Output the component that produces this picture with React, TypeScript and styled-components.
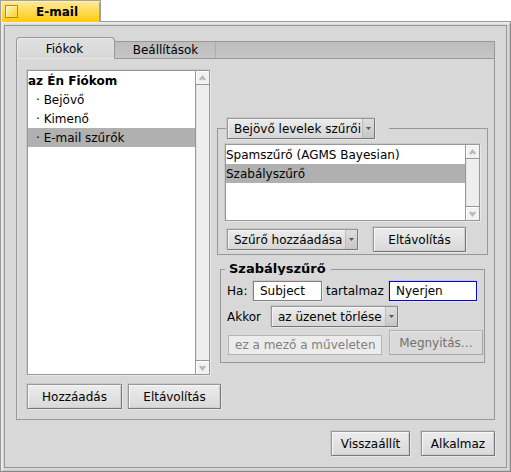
import React from "react";
import styled, { createGlobalStyle, css } from "styled-components";

const GlobalStyle = createGlobalStyle`
  *, *::before, *::after { box-sizing: border-box; }
  body {
    margin: 0;
    background: #fff;
    color: #000;
    font: 12px/20px "DejaVu Sans", sans-serif;
  }
  button, input, select { font: inherit; color: inherit; margin: 0; }
  ul { list-style: none; margin: 0; padding: 0; }
`;

const edge = "#989898";
const face = "#d8d8d8";

const Window = styled.div`
  display: flex;
  flex-direction: column;
  min-height: 100vh;
`;

const TitleTab = styled.header`
  display: flex;
  align-items: flex-start;
  gap: 18px;
  align-self: flex-start;
  width: 101px;
  height: 22px;
  margin-bottom: -1px;
  padding: 2px 0 0 4px;
  border: solid #a0a0a0;
  border-width: 1px 1px 0 1px;
  background: linear-gradient(#ffeb9a, #ffe068 35%, #ffcb0c);
  box-shadow: inset 1px 1px 0 #fff0b4, inset -1px 0 0 #dca800;
  font-weight: bold;
  z-index: 1;
`;

const CloseBox = styled.button`
  width: 13px;
  height: 13px;
  margin-top: 2px;
  padding: 0;
  border: 1px solid #b58b00;
  background: linear-gradient(135deg, #fff3bd, #ffd12a);
  box-shadow: inset 1px 1px 0 #fff8dc;
`;

const Title = styled.h1`
  margin: 0;
  font-size: 12px;
  line-height: 18px;
`;

const Frame = styled.div`
  display: flex;
  flex: 1;
  padding: 3px;
  border: 1px solid #888;
  border-top-color: ${edge};
  border-left-color: ${edge};
  background: ${face};
  box-shadow: inset 1px 1px 0 #eee, inset 2px 2px 0 #e4e4e4, inset -1px -1px 0 #c4c4c4;
`;

const Main = styled.main`
  display: flex;
  flex-direction: column;
  flex: 1;
  min-width: 0;
  padding: 11px;
  border: 1px solid ${edge};
  background: ${face};
`;

const TabBar = styled.div`
  display: flex;
  align-items: flex-end;
`;

const Tab = styled.button<{ $active?: boolean }>`
  height: 18px;
  width: 101px;
  padding: 0;
  border: solid ${edge};
  border-width: 1px 0;
  background: linear-gradient(#bdbdbd, #c6c6c6);
  box-shadow: inset -1px 0 0 #acacac;
  line-height: 16px;
  ${(p) =>
    p.$active &&
    css`
      width: 99px;
      height: 22px;
      padding: 1px 2px 0 0;
      border-width: 1px 1px 0 1px;
      border-radius: 4px 4px 0 0;
      background: linear-gradient(#e0e0e0, ${face});
      box-shadow: inset 1px 1px 0 #ebebeb, inset 0 -1px 0 #e6e6e6;
      line-height: 20px;
    `}
`;

const TabFill = styled.div`
  flex: 1;
  height: 18px;
  border: solid ${edge};
  border-width: 1px 1px 1px 0;
  background: linear-gradient(#bdbdbd, #c6c6c6);
`;

const Panel = styled.section`
  display: flex;
  flex-direction: column;
  flex: 1;
  gap: 9px;
  padding: 11px 6px 10px 10px;
  border: solid ${edge};
  border-width: 0 1px 1px 1px;
  box-shadow: inset 1px 0 0 #e2e2e2;
`;

const Columns = styled.div`
  display: flex;
  flex: 1;
  gap: 7px;
`;

const Settings = styled.div`
  display: flex;
  flex-direction: column;
  gap: 8px;
  flex: 1;
  min-width: 0;
  padding-top: 48px;
`;

const ListFrame = styled.div<{ $width?: number; $height?: number }>`
  display: flex;
  flex: none;
  width: ${(p) => (p.$width ? `${p.$width}px` : "auto")};
  height: ${(p) => (p.$height ? `${p.$height}px` : "auto")};
  border: 1px solid ${edge};
  background: #fff;
  box-shadow: -1px -1px 0 #c8c8c8, 1px 1px 0 #e8e8e8;
`;

const List = styled.ul`
  flex: 1;
  min-width: 0;
`;

const Item = styled.li<{ $selected?: boolean; $nested?: boolean; $heading?: boolean }>`
  height: 19px;
  padding-left: ${(p) => (p.$nested ? 8 : 0)}px;
  line-height: 20px;
  white-space: nowrap;
  font-weight: ${(p) => (p.$heading ? "bold" : "normal")};
  background: ${(p) => (p.$selected ? "#b0b0b0" : "transparent")};
`;

const ScrollTrack = styled.div`
  display: flex;
  flex-direction: column;
  justify-content: space-between;
  width: 14px;
  border-left: 1px solid ${edge};
  background: #eee;
  box-shadow: inset 1px 0 0 #e2e2e2;
`;

const ScrollButton = styled.button<{ $down?: boolean }>`
  display: grid;
  place-items: center;
  width: 13px;
  height: 14px;
  padding: 0;
  border: solid ${edge};
  border-width: ${(p) => (p.$down ? "1px 0 0" : "0 0 1px")};
  background: #f2f2f2;
  box-shadow: inset 1px 1px 0 #fff;
`;

function ScrollBar() {
  return (
    <ScrollTrack>
      <ScrollButton aria-label="Fel">
        <svg width="7" height="6" viewBox="0 0 7 6">
          <path d="M3.5 0 7 4.5 5 5.5 3.5 4 2 5.5 0 4.5Z" fill="#b8b8b8" />
        </svg>
      </ScrollButton>
      <ScrollButton $down aria-label="Le">
        <svg width="7" height="6" viewBox="0 0 7 6">
          <path d="M3.5 6 7 1.5 5 .5 3.5 2 2 .5 0 1.5Z" fill="#b8b8b8" />
        </svg>
      </ScrollButton>
    </ScrollTrack>
  );
}

const Button = styled.button<{ $width: number }>`
  flex: none;
  width: ${(p) => p.$width}px;
  height: 25px;
  padding: 1px 0 0;
  border: 1px solid;
  border-color: ${edge} #777 #777 ${edge};
  background: linear-gradient(#ececec, #d9d9d9);
  box-shadow: inset 1px 1px 0 #f8f8f8, inset -1px -1px 0 #cecece, -1px -1px 0 #c8c8c8, 1px 1px 0 #e6e6e6;
  line-height: 22px;
  white-space: nowrap;
  &:disabled {
    border-color: #b4b4b4 #a4a4a4 #a4a4a4 #b4b4b4;
    background: #dadada;
    box-shadow: inset 1px 1px 0 #e4e4e4;
    color: #727272;
  }
`;

const MenuBox = styled.span<{ $width: number }>`
  display: inline-grid;
  grid-template-columns: 1fr 12px;
  flex: none;
  width: ${(p) => p.$width}px;
  height: 21px;
  border: 1px solid;
  border-color: ${edge} #777 #777 ${edge};
  background: linear-gradient(#ececec, #d6d6d6);
  box-shadow: inset 1px 1px 0 #f4f4f4, -1px -1px 0 #c8c8c8, 1px 1px 0 #e6e6e6;
`;

const MenuSelect = styled.select`
  grid-area: 1 / 1 / 2 / 3;
  min-width: 0;
  height: 19px;
  padding: 1px 0 0 6px;
  border: 0;
  appearance: none;
  background: transparent;
  line-height: 18px;
`;

const MenuArrow = styled.span`
  grid-area: 1 / 2;
  display: grid;
  place-items: center;
  border-left: 1px solid #bcbcbc;
  background: linear-gradient(#dedede, #c6c6c6);
  pointer-events: none;
`;

function Menu({ label, value, width }: { label: string; value: string; width: number }) {
  return (
    <MenuBox $width={width}>
      <MenuSelect aria-label={label} defaultValue={value}>
        <option>{value}</option>
      </MenuSelect>
      <MenuArrow>
        <svg width="5" height="3" viewBox="0 0 5 3">
          <path d="M0 0H5L2.5 3Z" fill="#555" />
        </svg>
      </MenuArrow>
    </MenuBox>
  );
}

const FilterGroup = styled.fieldset`
  min-width: 0;
  margin: 0;
  padding: 5px 7px 2px;
  border: 1px solid ${edge};
`;

const FilterLegend = styled.legend`
  display: flex;
  margin-left: 1px;
  padding: 0 14px 0 1px;
`;

const RuleGroup = styled.fieldset`
  min-width: 0;
  margin: 0 3px;
  padding: 6px 1px 7px 6px;
  border: 1px solid ${edge};
`;

const RuleLegend = styled.legend`
  height: 12px;
  margin-left: -2px;
  padding: 0 5px 0 4px;
  overflow: hidden;
  font-size: 13px;
  font-weight: bold;
  line-height: 12px;
`;

const Row = styled.div`
  display: flex;
  align-items: center;
`;

const FilterActions = styled(Row)`
  gap: 15px;
  margin-top: 6px;
  padding-left: 2px;
`;

const MatchRow = styled(Row)`
  padding-right: 6px;
`;

const ActionRow = styled(Row)`
  align-items: flex-end;
  margin-top: 5px;
`;

const FolderRow = styled(Row)`
  align-items: flex-end;
  gap: 7px;
  margin-top: 3px;
  padding-left: 1px;
`;

const Label = styled.label<{ $width: number; $inset?: boolean }>`
  flex: none;
  width: ${(p) => p.$width}px;
  padding-left: ${(p) => (p.$inset ? 4 : 0)}px;
`;

const TextBox = styled.input<{ $width?: number }>`
  flex: ${(p) => (p.$width ? "none" : "1")};
  width: ${(p) => (p.$width ? `${p.$width}px` : "0")};
  min-width: 0;
  height: 20px;
  padding: 0 6px;
  border: 1px solid #808080;
  outline: 0;
  background: #fff;
  box-shadow: -1px -1px 0 #c8c8c8, 1px 1px 0 #e8e8e8;
  &:disabled {
    border-color: #b4b4b4;
    background: #ececec;
    box-shadow: none;
    color: #808080;
  }
`;

const ActiveTextBox = styled(TextBox)`
  border-color: #0000e5;
`;

const Actions = styled(Row)`
  gap: 6px;
`;

const Footer = styled.footer`
  display: flex;
  justify-content: flex-end;
  gap: 11px;
  margin-top: 11px;
`;

export default function App() {
  return (
    <>
      <GlobalStyle />
      <Window>
        <TitleTab>
          <CloseBox aria-label="Bezárás" />
          <Title>E-mail</Title>
        </TitleTab>
        <Frame>
          <Main>
            <TabBar role="tablist">
              <Tab role="tab" aria-selected="true" $active>Fiókok</Tab>
              <Tab role="tab" aria-selected="false">Beállítások</Tab>
              <TabFill />
            </TabBar>
            <Panel role="tabpanel">
              <Columns>
                <ListFrame $width={183}>
                  <List role="listbox" aria-label="Fiókok">
                    <Item role="option" $heading>az Én Fiókom</Item>
                    <Item role="option" $nested>· Bejövő</Item>
                    <Item role="option" $nested>· Kimenő</Item>
                    <Item role="option" aria-selected="true" $nested $selected>· E-mail szűrők</Item>
                  </List>
                  <ScrollBar />
                </ListFrame>
                <Settings>
                  <FilterGroup>
                    <FilterLegend>
                      <Menu label="Szűrők iránya" value="Bejövő levelek szűrői" width={148} />
                    </FilterLegend>
                    <ListFrame $height={77}>
                      <List role="listbox" aria-label="Szűrők">
                        <Item role="option">Spamszűrő (AGMS Bayesian)</Item>
                        <Item role="option" aria-selected="true" $selected>Szabályszűrő</Item>
                      </List>
                      <ScrollBar />
                    </ListFrame>
                    <FilterActions>
                      <Menu label="Új szűrő" value="Szűrő hozzáadása" width={131} />
                      <Button $width={93}>Eltávolítás</Button>
                    </FilterActions>
                  </FilterGroup>
                  <RuleGroup>
                    <RuleLegend>Szabályszűrő</RuleLegend>
                    <MatchRow>
                      <Label $width={26} htmlFor="field">Ha:</Label>
                      <TextBox $width={69} id="field" defaultValue="Subject" />
                      <Label $width={67} $inset htmlFor="pattern">tartalmaz</Label>
                      <ActiveTextBox id="pattern" defaultValue="Nyerjen" />
                    </MatchRow>
                    <ActionRow>
                      <Label as="span" $width={44}>Akkor</Label>
                      <Menu label="Akkor" value="az üzenet törlése" width={127} />
                    </ActionRow>
                    <FolderRow>
                      <TextBox aria-label="Művelet mezője" defaultValue="ez a mező a műveleten" disabled />
                      <Button $width={94} disabled>Megnyitás…</Button>
                    </FolderRow>
                  </RuleGroup>
                </Settings>
              </Columns>
              <Actions>
                <Button $width={95}>Hozzáadás</Button>
                <Button $width={93}>Eltávolítás</Button>
              </Actions>
            </Panel>
            <Footer>
              <Button $width={79}>Visszaállít</Button>
              <Button $width={74}>Alkalmaz</Button>
            </Footer>
          </Main>
        </Frame>
      </Window>
    </>
  );
}
